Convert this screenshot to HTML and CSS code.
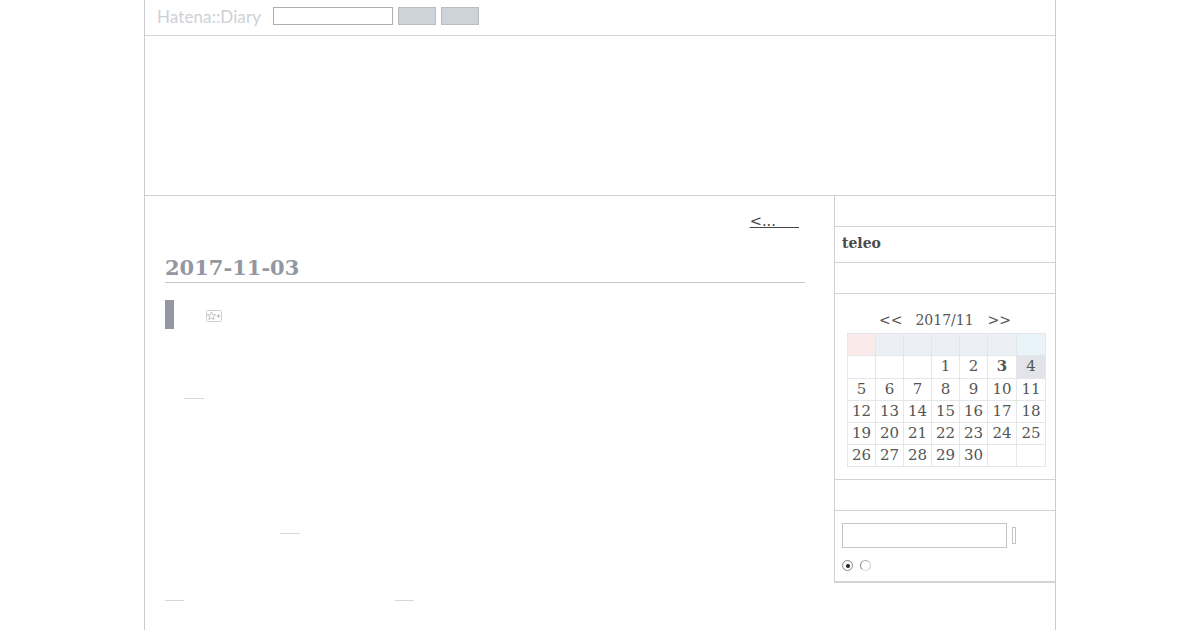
FILE: index.html
```html
<!DOCTYPE html>
<html lang="ja">
<head>
<meta charset="utf-8">
<title>teleo - 2017-11-03</title>
<link rel="stylesheet" href="styles.css">
</head>
<body>
<div class="page">
  <header class="topbar">
    <span class="logo">Hatena::Diary</span>
    <input class="top-input" type="text">
    <button class="top-btn" type="button"></button>
    <button class="top-btn" type="button"></button>
  </header>
  <div class="banner"></div>
  <div class="columns">
    <main class="main">
      <div class="pager"><a class="pager-link" href="#">&lt;...&nbsp;&nbsp;&nbsp;&nbsp;&nbsp;</a></div>
      <h2 class="date">2017-11-03</h2>
      <div class="entry-head">
        <span class="marker"></span>
        <svg class="star-add" width="16" height="12" viewBox="0 0 16 12" aria-hidden="true">
          <rect x="0.5" y="0.5" width="15" height="11" rx="1" fill="#fff" stroke="#cfcfcf"/>
          <path d="M5.5 1.8l1.1 2.8 3 .2-2.3 1.9.8 2.9-2.6-1.6-2.6 1.6.8-2.9-2.3-1.9 3-.2z" fill="none" stroke="#b4b4b4" stroke-width=".8"/>
          <path d="M10.5 6h4M12.5 4v4" stroke="#b4b4b4" stroke-width=".9"/>
        </svg>
      </div>
      <div class="rule-row rule-a"><span class="rule rule-w20"></span></div>
      <div class="rule-row rule-b"><span class="rule rule-w20"></span></div>
      <div class="rule-row rule-c"><span class="rule rule-w19"></span><span class="rule rule-w19 rule-far"></span></div>
    </main>
    <aside class="side">
      <div class="sec sec-top"></div>
      <div class="sec sec-name">teleo</div>
      <div class="sec sec-gap"></div>
      <div class="sec sec-cal">
        <div class="cal-title"><span>&lt;&lt;</span><span class="cal-month">2017/11</span><span>&gt;&gt;</span></div>
        <table class="cal">
          <colgroup><col class="col-n"><col class="col-n"><col class="col-n"><col class="col-n"><col class="col-n"><col class="col-w"><col class="col-w"></colgroup>
          <tr class="cal-head"><th class="sun"></th><th></th><th></th><th></th><th></th><th></th><th class="sat"></th></tr>
          <tr class="cal-first"><td></td><td></td><td></td><td>1</td><td>2</td><td class="cur">3</td><td class="next">4</td></tr>
          <tr><td>5</td><td>6</td><td>7</td><td>8</td><td>9</td><td>10</td><td>11</td></tr>
          <tr><td>12</td><td>13</td><td>14</td><td>15</td><td>16</td><td>17</td><td>18</td></tr>
          <tr><td>19</td><td>20</td><td>21</td><td>22</td><td>23</td><td>24</td><td>25</td></tr>
          <tr><td>26</td><td>27</td><td>28</td><td>29</td><td>30</td><td></td><td></td></tr>
        </table>
      </div>
      <div class="sec sec-gap"></div>
      <div class="sec sec-search">
        <div class="search-row"><span class="search-box"></span><span class="search-btn"></span></div>
        <div class="radio-row"><span class="radio radio-on"></span><span class="radio radio-off"></span></div>
      </div>
    </aside>
  </div>
</div>
</body>
</html>
```
FILE: styles.css
```css
html, body { margin: 0; padding: 0; background: #fff; }
body { height: 630px; overflow: hidden; font-family: "DejaVu Serif", serif; color: #444; }
.page { width: 910px; height: 630px; margin-left: 144px; border-left: 1px solid #ccc; border-right: 1px solid #ccc; }

.topbar { height: 32px; padding: 0 0 3px 12px; border-bottom: 1px solid #d4d4d4; display: flex; align-items: center; }
.logo { font-family: "Lato", sans-serif; font-size: 17px; color: #ced1d5; width: 116px; white-space: nowrap; letter-spacing: .1px; }
.top-input { box-sizing: border-box; width: 120px; height: 18px; border: 1px solid #aeaeae; background: #fff; padding: 0; margin: 0 5px 0 0; }
.top-btn { box-sizing: border-box; width: 38px; height: 18px; background: #ced3da; border: 1px solid #b8bcc2; padding: 0; margin: 0 5px 0 0; }

.banner { height: 159px; border-bottom: 1px solid #d0d0d0; }

.columns { display: flex; height: 434px; align-items: flex-start; }
.main { width: 689px; box-sizing: border-box; padding: 0 29px 0 20px; }
.pager { height: 51px; padding: 16px 6px 0 0; box-sizing: border-box; text-align: right; font-size: 14.6px; line-height: 17px; }
.pager-link { color: #444; text-decoration: underline; }
.date { margin: 4px 0 0; height: 32px; box-sizing: border-box; padding-top: 1px; font-size: 21px; line-height: 31px; color: #9297a1; border-bottom: 1px solid #c6c6c6; font-weight: bold; }
.entry-head { display: flex; align-items: flex-start; margin-top: 17px; height: 29px; }
.marker { width: 9px; height: 29px; background: #9297a1; }
.star-add { margin: 10px 0 0 32px; }

.rule-row { display: flex; height: 1px; }
.rule { height: 1px; background: #d8d8d8; display: block; }
.rule-w20 { width: 20px; }
.rule-w19 { width: 19px; }
.rule-a { margin-top: 69px; padding-left: 19px; }
.rule-b { margin-top: 134px; padding-left: 115px; }
.rule-c { margin-top: 66px; }
.rule-far { margin-left: 211px; }

.side { width: 221px; box-sizing: border-box; border-left: 1px solid #d0d0d0; border-bottom: 2px solid #d4d4d4; }
.sec { border-bottom: 1px solid #d4d4d4; box-sizing: border-box; }
.sec-top { height: 31px; }
.sec-name { height: 36px; padding: 1px 0 0 7px; font-size: 14px; font-weight: bold; line-height: 31px; color: #4a4a4a; }
.sec-gap { height: 31px; }
.sec-cal { height: 186px; padding: 16px 9px 0 12px; }
.cal-title { display: flex; justify-content: center; gap: 13px; padding-right: 3px; font-size: 14px; line-height: 20px; color: #555; height: 23px; }
.cal-month { margin-right: 1px; }
.cal { border-collapse: collapse; table-layout: fixed; width: 199px; }
.col-n { width: 28px; }
.col-w { width: 29px; }
.cal th, .cal td { border: 1px solid #e4e6e9; padding: 0; height: 21px; text-align: center; font-size: 15px; line-height: 21px; font-weight: normal; color: #555; }
.cal-head th { background: #eceff3; height: 21px; }
.cal-head .sun { background: #fbeaea; }
.cal-head .sat { background: #e8f4fa; }
.cal .cal-first td { height: 20px; line-height: 20px; padding-bottom: 2px; }
.cal .cur { font-weight: bold; font-size: 15px; }
.cal .next { background: #e3e4ea; }

.sec-search { height: 70px; border-bottom: 0; padding: 12px 0 0 7px; }
.search-row { display: flex; align-items: center; height: 25px; }
.search-box { width: 165px; height: 25px; box-sizing: border-box; border: 1px solid #c4c4c4; background: #fff; }
.search-btn { width: 4px; height: 17px; box-sizing: border-box; margin-left: 5px; border: 1px solid #c4c4c4; background: #fff; }
.radio-row { display: flex; gap: 7px; margin-top: 12px; }
.radio { width: 11px; height: 11px; box-sizing: border-box; border: 1px solid #888; border-radius: 50%; background: #fff; position: relative; display: block; }
.radio-on::after { content: ""; position: absolute; left: 2.5px; top: 2.5px; width: 4px; height: 4px; border-radius: 50%; background: #222; }
.radio-off { border-color: #aaa #ccc #ddd #888; }
```
